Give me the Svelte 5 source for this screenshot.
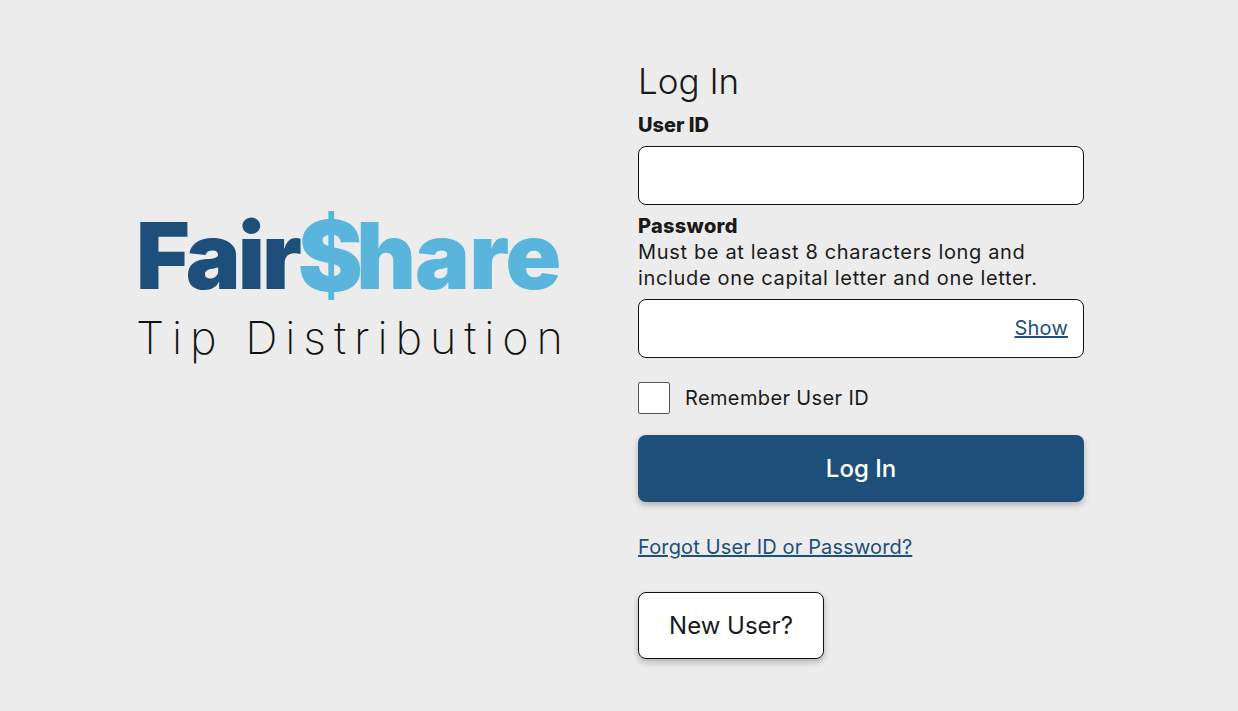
<script>
  let remember = $state(false);
</script>

<main class="page">
  <section class="brand">
    <div class="logo">
      <div class="wordmark"><span class="dark">Fair</span><span class="dollar">$</span><span class="light">hare</span></div>
      <div class="tag">Tip Distribution</div>
    </div>
  </section>
  <section class="panel">
    <h1>Log In</h1>
    <label class="lbl" for="uid">User ID</label>
    <input id="uid" class="field" type="text" />
    <label class="lbl pw" for="pwd">Password</label>
    <p class="help">Must be at least 8 characters long and<br />include one capital letter and one letter.</p>
    <div class="pwrap">
      <input id="pwd" class="field" type="password" />
      <a class="show" href="#show">Show</a>
    </div>
    <label class="rem">
      <input type="checkbox" bind:checked={remember} />
      <span>Remember User ID</span>
    </label>
    <button class="primary" type="button">Log In</button>
    <a class="forgot" href="#forgot">Forgot User ID or Password?</a>
    <button class="secondary" type="button">New User?</button>
  </section>
</main>

<style>
  :global(body) {
    margin: 0;
    background: #ececec;
    font-family: "Inter", "Liberation Sans", sans-serif;
    color: #1a1a1a;
  }
  .page {
    display: flex;
    height: 711px;
    box-sizing: border-box;
    overflow: hidden;
  }
  .brand {
    width: 638px;
    flex: none;
    padding-left: 136px;
    padding-top: 206px;
    box-sizing: border-box;
  }
  .logo { width: 440px; }
  .wordmark {
    font-family: "Inter", sans-serif;
    font-weight: 900;
    font-size: 92px;
    line-height: 100px;
    height: 100px;
    white-space: nowrap;
  }
  .dark { color: #1e4f7b; letter-spacing: -3px; }
  .light { color: #59b5db; letter-spacing: -0.8px; }
  .dollar {
    color: #59b5db;
    font-size: 98px;
    vertical-align: -2px;
    margin: 0 -7px 0 -1px;
  }
  .tag {
    font-family: "Inter", sans-serif;
    font-weight: 200;
    font-size: 45px;
    line-height: 56px;
    letter-spacing: 7.9px;
    color: #111;
    white-space: nowrap;
    margin-top: 4px;
  }
  .panel {
    width: 446px;
    display: flex;
    flex-direction: column;
    align-items: flex-start;
    padding-top: 59px;
    box-sizing: border-box;
  }
  h1 {
    font-weight: 300;
    font-size: 35px;
    line-height: 44px;
    margin: 0;
  }
  .lbl {
    font-weight: 800;
    font-size: 20px;
    line-height: 26px;
    margin-top: 9px;
  }
  .lbl.pw { margin-top: 8px; letter-spacing: 0.3px; }
  .field {
    display: block;
    width: 446px;
    height: 59px;
    box-sizing: border-box;
    border: 1px solid #111;
    border-radius: 8px;
    background: #fff;
    outline: none;
    padding: 0 16px;
  }
  #uid { margin-top: 8px; }
  .help {
    margin: 0 0 8px;
    font-size: 20px;
    line-height: 26px;
    font-weight: 400;
    letter-spacing: 0.66px;
    white-space: nowrap;
  }
  .pwrap { position: relative; width: 446px; }
  .show {
    position: absolute;
    right: 16px;
    top: 15px;
    font-size: 20px;
    letter-spacing: 0.2px;
    line-height: 28px;
    color: #1e4f7b;
  }
  .rem {
    display: flex;
    align-items: center;
    gap: 15px;
    margin-top: 24px;
    font-size: 20px;
    letter-spacing: 0.37px;
    line-height: 32px;
  }
  .rem input {
    appearance: none;
    width: 32px;
    height: 32px;
    margin: 0;
    background: #fff;
    border: 1px solid #555;
    border-radius: 2px;
    box-sizing: border-box;
  }
  button {
    font-family: inherit;
    font-weight: 500;
    cursor: pointer;
    box-sizing: border-box;
    height: 67px;
    box-shadow: 0 3px 6px rgba(0, 0, 0, 0.25);
  }
  .primary {
    width: 446px;
    margin-top: 21px;
    background: #1e4f7b;
    color: #fff;
    border: 0;
    border-radius: 8px;
    font-size: 24px;
  }
  .forgot {
    margin-top: 31px;
    font-size: 20px;
    letter-spacing: 0.15px;
    line-height: 28px;
    color: #1e4f7b;
  }
  .secondary {
    width: 186px;
    margin-top: 31px;
    background: #fff;
    color: #1a1a1a;
    border: 1px solid #111;
    border-radius: 8px;
    font-size: 24px;
    font-weight: 400;
  }
</style>
